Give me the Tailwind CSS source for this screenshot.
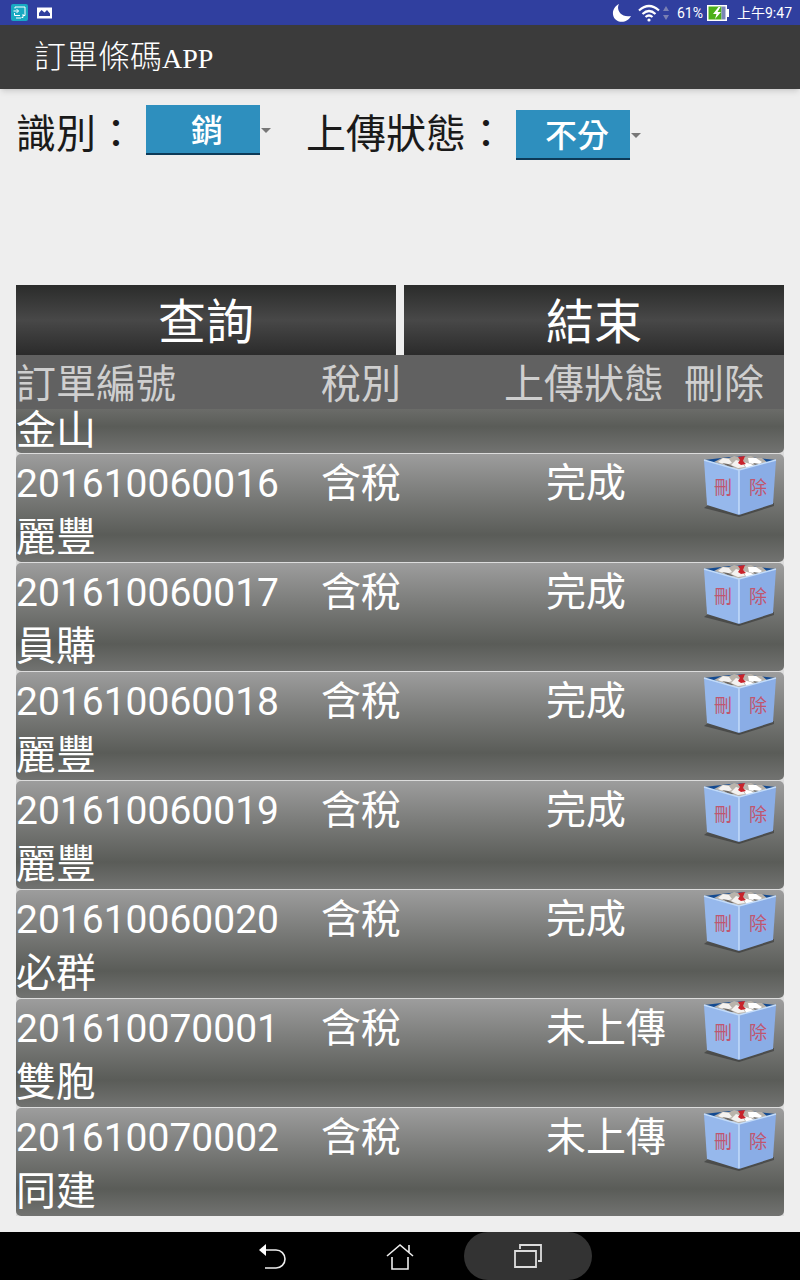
<!DOCTYPE html>
<html lang="zh-Hant">
<head>
    <meta charset="UTF-8">
    <meta name="viewport" content="width=device-width, initial-scale=1.0">
    <title>訂單條碼APP</title>
    <script src="https://cdn.jsdelivr.net/npm/@tailwindcss/browser@4"></script>
</head>
<body class="min-h-screen flex flex-col bg-[#eeeeee] font-[Roboto,'Noto_Sans_CJK_TC',sans-serif]">
    <!-- Status Bar -->
    <div class="h-[25px] px-2 bg-[#303f9f] text-white flex items-center justify-between">
        <div class="flex items-center gap-2 pl-[3px]">
            <svg class="w-[17px] h-[17px]" viewBox="0 0 17 17" fill="none">
                <rect width="17" height="17" rx="2" fill="#18a9c2"/>
                <path d="M4 4.500V3h10v8.500h-2M3.500 9v2.500H9M5 14h5M2.500 7h5M5.500 5l2 2-2 2M12 10v3.500h-1.500" stroke="#fff"/>
            </svg>
            <svg class="w-[18px] h-3" viewBox="0 0 18 12">
                <path d="M1 0.500h15v11H1z" fill="#fff"/>
                <path d="M3 9V6l2.500-3 3 2.500 2.500-2.500 3 3.500V9z" fill="#303f9f"/>
            </svg>
        </div>
        <div class="flex items-center">
            <svg class="w-5 h-5" viewBox="0 0 20 20"><path d="M7 1C4 6 8 15 19 13 16 19 8 21 3 16-1 11 1 4 7 1z" fill="#fff"/></svg>
            <svg class="w-[22px] h-[18px] ml-[6px]" viewBox="0 0 22 18" fill="none" stroke="#fff" stroke-width="2.200">
                <path d="M1 6.500Q11-2.500 21 6.500M4.500 10Q11 4 17.500 10M7.500 13Q11 10 14.500 13"/>
                <circle cx="11" cy="16" r="1.600" fill="#fff" stroke="none"/>
            </svg>
            <svg class="w-[6px] h-[14px] ml-[3px]" viewBox="0 0 6 14" fill="#7a80b4"><path d="M3 0l3 5H0zM3 14l3-5H0z"/></svg>
            <span class="text-sm ml-2">61%</span>
            <svg class="w-[22px] h-4 ml-1" viewBox="0 0 22 16">
                <path d="M0 0h20v4h2v8h-2v4H0z" fill="#fff"/>
                <path d="M1.500 1.500h13v13h-13z" fill="#4caf1a"/>
                <path d="M14.500 1.500h4v13h-4z" fill="#7b86b8"/>
                <path d="M11.500 2L6 9h3.500L8 14l6-7h-3.500l3-5z" fill="#fff"/>
            </svg>
            <span class="text-sm ml-2">上午9:47</span>
        </div>
    </div>

    <!-- App Bar -->
    <header class="h-16 pl-[34px] bg-[#3b3b3b] text-white flex items-center shadow-md">
        <h1 class="text-[28px] font-light font-['Liberation_Serif','Noto_Sans_CJK_TC',serif]"><span class="text-[32px]">訂單條碼</span>APP</h1>
    </header>

    <main class="flex-1 px-4 pb-4">
        <!-- Filters -->
        <form class="h-[196px] pt-4 flex items-start text-[40px] text-[#1a1a1a]">
            <label for="kind" class="leading-[60px]">識別：</label>
            <div class="flex items-center ml-[10px]">
                <select id="kind" class="appearance-none w-[114px] h-[50px] pl-2 pt-1 bg-[#2e8fbe] border-b-2 border-[#0d3a58] text-white text-[32px] leading-[44px] font-medium text-center">
                    <option>銷</option>
                </select>
                <svg class="w-[10px] h-[5px] ml-px" viewBox="0 0 10 5" fill="#777"><path d="M0 0h10L5 5z"/></svg>
            </div>
            <label for="status" class="ml-[35px] leading-[60px]">上傳狀態：</label>
            <div class="flex items-center ml-[10px] mt-[5px]">
                <select id="status" class="appearance-none w-[114px] h-[50px] pl-2 pt-1 bg-[#2e8fbe] border-b-2 border-[#0d3a58] text-white text-[32px] leading-[44px] font-medium text-center">
                    <option>不分</option>
                </select>
                <svg class="w-[10px] h-[5px] ml-px" viewBox="0 0 10 5" fill="#777"><path d="M0 0h10L5 5z"/></svg>
            </div>
        </form>

        <div class="grid grid-cols-2 gap-2 text-white text-[48px] leading-[64px]">
            <button type="button" class="h-[70px] pt-[6px] bg-linear-to-b from-[#2b2c2b] via-[#484848] to-[#2b2b2b]">查詢</button>
            <button type="button" class="h-[70px] pt-[6px] bg-linear-to-b from-[#2b2c2b] via-[#484848] to-[#2b2b2b]">結束</button>
        </div>

        <!-- Orders -->
        <table class="block text-[40px] leading-[48px] text-white text-left whitespace-nowrap">
            <thead class="block bg-[#616161] text-[#cfcfcf]">
                <tr class="grid grid-cols-[305fr_183fr_180fr_100fr]">
                    <th class="pt-[6px] font-normal">訂單編號</th>
                    <th class="pt-[6px] font-normal">稅別</th>
                    <th class="pt-[6px] font-normal">上傳狀態</th>
                    <th class="pt-[6px] font-normal">刪除</th>
                </tr>
            </thead>
            <tbody id="orders" class="flex flex-col gap-px bg-[#dcdcdc]">
                <tr class="h-11 flex items-end rounded-b-[5px] bg-linear-to-b from-[#6b6c69] via-[#5a5c58] via-40% to-[#727371]">
                    <td class="leading-[44px]">金山</td>
                </tr>
            </tbody>
        </table>
    </main>

    <!-- Navigation Bar -->
    <nav class="h-12 bg-black flex justify-center">
        <button type="button" aria-label="返回" class="w-32 flex items-center justify-center">
            <svg class="w-7 h-7" viewBox="0 0 28 28" fill="none"><path d="M6 8h12a8.500 8.500 0 0 1 0 18H7" stroke="#eee" stroke-width="1.600"/><path d="M1 8l7-6v12z" fill="#fff"/></svg>
        </button>
        <button type="button" aria-label="主畫面" class="w-32 flex items-center justify-center">
            <svg class="w-7 h-7" viewBox="0 0 28 28" fill="none" stroke="#eee" stroke-width="1.600"><path d="M1 14L14 3l13 11M23 10V3M6 15v12h16V15"/></svg>
        </button>
        <button type="button" aria-label="最近使用" class="w-32 flex items-center justify-center rounded-full bg-[#333333]">
            <svg class="w-7 h-6" viewBox="0 0 28 24" fill="none" stroke="#ddd" stroke-width="1.800"><path d="M1 7h21v16H1zM6 5V1h21v16h-3"/></svg>
        </button>
    </nav>

    <template id="orderRow">
        <tr class="grid grid-cols-[305fr_183fr_180fr_100fr] rounded-[5px] bg-linear-to-b from-[#9d9d9d] via-[#5a5c58] via-75% to-[#727371]">
            <td class="pt-[6px] text-[39px]" data-field="no"></td>
            <td class="pt-[6px]">含稅</td>
            <td class="pt-[6px] pl-[42px]" data-field="status"></td>
            <td class="h-[54px] pl-[19px]">
                <button type="button" aria-label="刪除" class="block w-[74px] h-16">
                    <svg class="w-[74px] h-16" viewBox="0 0 74 64">
                        <path d="M5 51L1 54l35 9 35-11V49z" fill="#222" opacity=".45"/>
                        <path d="M1 6L36 2l37 4-37 10z" fill="#134a91"/>
                        <path d="M11 8l8-4 7 0 5-2 8 1 9-1 4 2 7 0 6 5-14 4-15 3-13-4z" fill="#b9b3ab"/>
                        <path d="M15 8l5-4 6 1 3 4-6 2zM28 11l5-5 6 2 3 5-7 1z" fill="#f4f2f0"/>
                        <path d="M45 4l8 0 6 4-4 3-9-2zM40 8l8 2 4 3-8 2z" fill="#fff"/>
                        <path d="M19 9l6 1 6 3-5 0zM50 9l7 1-4 2z" fill="#6e6a66"/>
                        <path d="M35 3l7-1-2 5 3 3-5 1-3-2 2-3z" fill="#c8232b"/>
                        <path d="M1 6l35 10v45L4 51z" fill="#96b8ec"/>
                        <path d="M36 16l37-10-3 44-34 11z" fill="#8aade6"/>
                        <path d="M1 6l35 10L73 6M36 16v44" fill="none" stroke="#c3dcfa" stroke-width="1.500"/>
                        <g fill="#c0566f" font-family="'Noto Sans CJK TC',sans-serif" font-size="18"><text x="11" y="40">刪</text><text x="46" y="40">除</text></g>
                    </svg>
                </button>
            </td>
            <td class="col-span-4 pt-[6px]" data-field="name"></td>
        </tr>
    </template>

    <script>
        const orders = [
            { no: '201610060016', status: '完成', name: '麗豐' },
            { no: '201610060017', status: '完成', name: '員購' },
            { no: '201610060018', status: '完成', name: '麗豐' },
            { no: '201610060019', status: '完成', name: '麗豐' },
            { no: '201610060020', status: '完成', name: '必群' },
            { no: '201610070001', status: '未上傳', name: '雙胞' },
            { no: '201610070002', status: '未上傳', name: '同建' }
        ];
        const template = document.getElementById('orderRow');

        orders.forEach(order => {
            const row = template.content.cloneNode(true);
            row.querySelectorAll('[data-field]').forEach(cell => {
                cell.textContent = order[cell.dataset.field];
            });
            document.getElementById('orders').appendChild(row);
        });
    </script>
</body>
</html>
